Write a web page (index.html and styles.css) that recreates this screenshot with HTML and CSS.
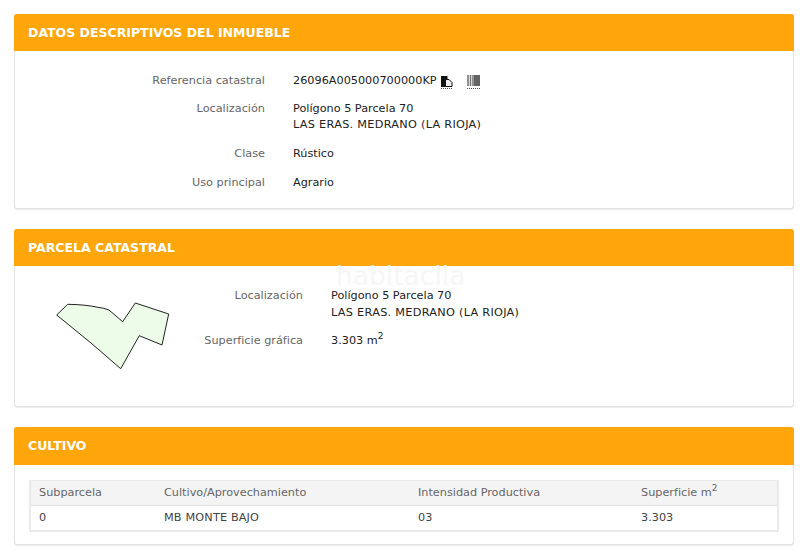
FILE: index.html
```html
<!DOCTYPE html>
<html lang="es">
<head>
<meta charset="utf-8">
<title>Datos descriptivos del inmueble</title>
<link rel="stylesheet" href="styles.css">
</head>
<body>
<section class="card card-datos">
  <h2 class="card-title">DATOS DESCRIPTIVOS DEL INMUEBLE</h2>
  <dl class="fields fields-datos">
    <div class="field">
      <dt>Referencia catastral</dt>
      <dd class="ref">26096A005000700000KP
        <svg class="icon icon-copy" width="13" height="16" viewBox="0 0 13 16" aria-hidden="true">
          <path d="M1 3h6.500v11H1z" fill="#111"/>
          <path d="M5.500 6.500H9L12 9.500V13.500H5.500z" fill="#eee" stroke="#111" stroke-width="1"/>
          <path d="M1 15.500h11" stroke="#555" stroke-width="1" stroke-dasharray="1 1"/>
        </svg>
        <svg class="icon icon-barcode" width="13" height="16" viewBox="0 0 13 16" aria-hidden="true">
          <path d="M1 2v11M3.500 2v11M6 2v11" stroke="#777" stroke-width="1.600"/>
          <path d="M8 2v11M10 2v11M12 2v11" stroke="#111" stroke-width="1.300"/>
          <path d="M0 15.500h13" stroke="#555" stroke-width="1" stroke-dasharray="1 1"/>
        </svg>
      </dd>
    </div>
    <div class="field">
      <dt>Localización</dt>
      <dd>Polígono 5 Parcela 70<br><span class="caps">LAS ERAS. MEDRANO (LA RIOJA)</span></dd>
    </div>
    <div class="field">
      <dt>Clase</dt>
      <dd>Rústico</dd>
    </div>
    <div class="field">
      <dt>Uso principal</dt>
      <dd>Agrario</dd>
    </div>
  </dl>
</section>

<section class="card card-parcela">
  <h2 class="card-title">PARCELA CATASTRAL</h2>
  <div class="parcela-body">
    <svg class="plot" width="132" height="80" viewBox="0 0 132 80" aria-hidden="true">
      <path d="M6.700 15 17.700 4.300Q35 4.500 48 7.300Q54 8 59 10L72.700 21.700 85.300 3 118.700 14 112 45 89.300 35.700 70.700 68.700 41 43Z" fill="#edfbe9" stroke="#222" stroke-width="1"/>
    </svg>
    <dl class="fields fields-parcela">
      <div class="field">
        <dt>Localización</dt>
        <dd>Polígono 5 Parcela 70<br><span class="caps">LAS ERAS. MEDRANO (LA RIOJA)</span></dd>
      </div>
      <div class="field">
        <dt>Superficie gráfica</dt>
        <dd>3.303 m<sup>2</sup></dd>
      </div>
    </dl>
    <span class="watermark">habitaclia</span>
  </div>
</section>

<section class="card card-cultivo">
  <h2 class="card-title">CULTIVO</h2>
  <div class="cultivo-body">
    <table class="crop-table">
      <thead>
        <tr>
          <th class="col-sub">Subparcela</th>
          <th class="col-cul">Cultivo/Aprovechamiento</th>
          <th class="col-int">Intensidad Productiva</th>
          <th>Superficie m<sup>2</sup></th>
        </tr>
      </thead>
      <tbody>
        <tr>
          <td>0</td>
          <td class="caps-soft">MB MONTE BAJO</td>
          <td>03</td>
          <td>3.303</td>
        </tr>
      </tbody>
    </table>
  </div>
</section>
</body>
</html>
```
FILE: styles.css
```css
* { box-sizing: border-box; }

html, body { height: 558px; overflow: hidden; }

body {
  margin: 0;
  padding: 14px 6px 0 14px;
  background: #fff;
  font-family: "DejaVu Sans", Verdana, sans-serif;
  font-size: 11.250px;
  line-height: 16px;
  color: #333;
}

.card {
  background: #fff;
  border: 1px solid #e4e4e4;
  border-top: 0;
  border-radius: 3px;
  box-shadow: 0 1px 1px rgba(0, 0, 0, .08);
  margin-bottom: 20px;
}

.card-title {
  margin: 0 -1px;
  height: 37px;
  padding: 0 14px;
  background: #ffa60b;
  border-radius: 3px 3px 0 0;
  color: #fff;
  font-size: 12.500px;
  font-weight: 700;
  line-height: 37px;
}

.card-datos { height: 195px; }
.card-parcela { height: 178px; }
.card-cultivo { height: 118px; margin-bottom: 0; }
.card-cultivo .card-title { height: 38px; line-height: 38px; }

.fields { margin: 0; }

.field {
  display: flex;
  margin-bottom: 12.600px;
}

.field dt {
  width: 250px;
  flex: none;
  text-align: right;
  color: #666;
}

.field dd {
  margin: 0 0 0 28px;
  color: #222;
}

.caps { letter-spacing: .29px; }
.caps-soft { letter-spacing: .15px; }

.fields-datos { padding-top: 21.800px; }

.ref { display: flex; align-items: center; }
.icon { flex: none; }
.icon-copy { margin-left: 3px; }
.icon-barcode { margin-left: 14px; }

sup {
  font-size: 9px;
  line-height: 0;
}

.parcela-body {
  position: relative;
  display: flex;
  align-items: flex-start;
  padding-top: 22px;
}

.plot {
  flex: none;
  margin: 12px 0 0 35px;
}

.fields-parcela { line-height: 16.600px; }
.fields-parcela .field { margin-bottom: 12px; }
.fields-parcela .field dt { width: 121px; }

.watermark {
  position: absolute;
  left: 321px;
  top: -1px;
  font-size: 26.500px;
  line-height: 22px;
  color: #f6f6f6;
}

.cultivo-body { padding: 15px 14px 0; }

.crop-table {
  width: 750px;
  border-collapse: separate;
  border-spacing: 0;
  border: 2px solid #eaeaea;
  border-width: 1px 2px 2px 2px;
  color: #444;
}

.crop-table th,
.crop-table td {
  height: 24px;
  padding: 0 9px;
  text-align: left;
  font-weight: 400;
}

.crop-table th:first-child,
.crop-table td:first-child { padding-left: 8px; }

.crop-table th {
  height: 25px;
  background: #f4f4f4;
  color: #666;
  border-bottom: 1px solid #e2e2e2;
}

.col-sub { width: 124px; }
.col-cul { width: 254px; }
.col-int { width: 223px; }
```
